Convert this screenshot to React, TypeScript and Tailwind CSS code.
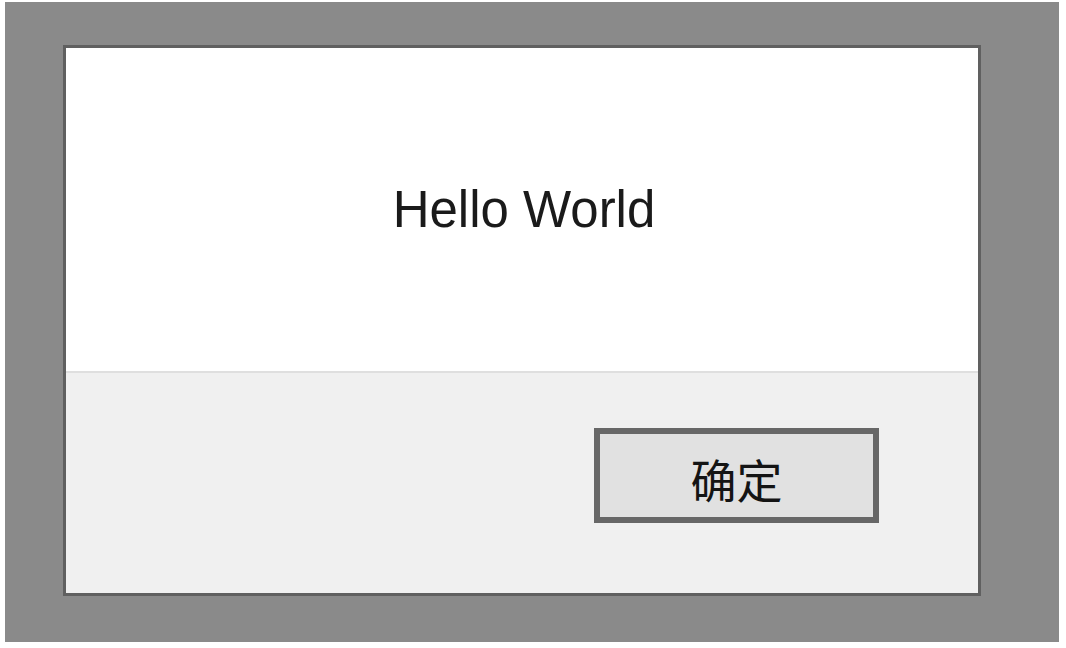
import React from "react";

export default function App() {
  return (
    <div className="w-[1066px] h-[648px] bg-white pt-[2px] pl-[5px] pr-[7px] pb-[6px]">
      <div className="w-full h-full bg-[#8a8a8a] pt-[43px] pl-[58px] pr-[78px] pb-[46px]">
        <div className="w-full h-full border-[3px] border-[#606060] flex flex-col bg-white">
          <div className="h-[323px] bg-white flex items-center justify-center">
            <span
              className="text-[51px] leading-none text-[#1a1a1a] pl-[4px]"
              style={{ fontFamily: '"Liberation Sans", Arial, sans-serif' }}
            >
              Hello World
            </span>
          </div>
          <div className="h-[2px] bg-[#dfdfdf]" />
          <div className="flex-1 bg-[#f0f0f0] flex justify-end items-start pt-[55px] pr-[99px]">
            <div className="w-[285px] h-[95px] border-[6px] border-[#676767] bg-[#e1e1e1] flex items-center justify-center">
              <span
                className="text-[46px] leading-none text-[#141414] pt-[4px]"
                style={{ fontFamily: '"Noto Sans CJK SC", "Noto Sans", sans-serif' }}
              >
                确定
              </span>
            </div>
          </div>
        </div>
      </div>
    </div>
  );
}
